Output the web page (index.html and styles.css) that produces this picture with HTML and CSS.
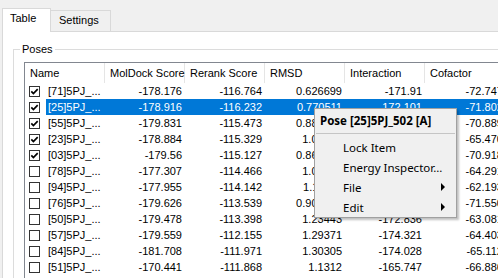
FILE: index.html
```html
<!DOCTYPE html>
<html lang="en">
<head>
  <meta charset="UTF-8">
  <title>Poses</title>
  <link rel="stylesheet" href="styles.css">
</head>
<body>
  <div class="tabs">
    <div class="tab active">Table</div>
    <div class="tab">Settings</div>
  </div>

  <div class="page">
    <fieldset class="group">
      <legend>Poses</legend>
      <div class="list">
        <div class="row head">
          <div class="cell name">Name</div>
          <div class="cell">MolDock Score</div>
          <div class="cell">Rerank Score</div>
          <div class="cell">RMSD</div>
          <div class="cell">Interaction</div>
          <div class="cell">Cofactor</div>
        </div>

        <div class="row">
          <div class="check on"><svg width="11" height="11"><rect x="0.5" y="0.5" width="10" height="10"/><path d="M2.3 5.4 L4.4 7.6 L8.7 3.2"/></svg></div>
          <div class="label">[71]5PJ_...</div>
          <div class="num">-178.176</div><div class="num">-116.764</div><div class="num">0.626699</div><div class="num">-171.91</div><div class="num">-72.7475</div>
        </div>
        <div class="row sel">
          <div class="check on"><svg width="11" height="11"><rect x="0.5" y="0.5" width="10" height="10"/><path d="M2.3 5.4 L4.4 7.6 L8.7 3.2"/></svg></div>
          <div class="label">[25]5PJ_...</div>
          <div class="num">-178.916</div><div class="num">-116.232</div><div class="num">0.770511</div><div class="num">-172.101</div><div class="num">-71.8024</div>
        </div>
        <div class="row">
          <div class="check on"><svg width="11" height="11"><rect x="0.5" y="0.5" width="10" height="10"/><path d="M2.3 5.4 L4.4 7.6 L8.7 3.2"/></svg></div>
          <div class="label">[55]5PJ_...</div>
          <div class="num">-179.831</div><div class="num">-115.473</div><div class="num">0.884421</div><div class="num">-172.453</div><div class="num">-70.8893</div>
        </div>
        <div class="row">
          <div class="check on"><svg width="11" height="11"><rect x="0.5" y="0.5" width="10" height="10"/><path d="M2.3 5.4 L4.4 7.6 L8.7 3.2"/></svg></div>
          <div class="label">[23]5PJ_...</div>
          <div class="num">-178.884</div><div class="num">-115.329</div><div class="num">1.02753</div><div class="num">-173.214</div><div class="num">-65.4706</div>
        </div>
        <div class="row">
          <div class="check on"><svg width="11" height="11"><rect x="0.5" y="0.5" width="10" height="10"/><path d="M2.3 5.4 L4.4 7.6 L8.7 3.2"/></svg></div>
          <div class="label">[03]5PJ_...</div>
          <div class="num">-179.56</div><div class="num">-115.127</div><div class="num">0.861043</div><div class="num">-171.648</div><div class="num">-70.9183</div>
        </div>
        <div class="row">
          <div class="check"><svg width="11" height="11"><rect x="0.5" y="0.5" width="10" height="10"/></svg></div>
          <div class="label">[78]5PJ_...</div>
          <div class="num">-177.307</div><div class="num">-114.466</div><div class="num">1.04812</div><div class="num">-170.972</div><div class="num">-64.2910</div>
        </div>
        <div class="row">
          <div class="check"><svg width="11" height="11"><rect x="0.5" y="0.5" width="10" height="10"/></svg></div>
          <div class="label">[94]5PJ_...</div>
          <div class="num">-177.955</div><div class="num">-114.142</div><div class="num">1.11957</div><div class="num">-172.377</div><div class="num">-62.1935</div>
        </div>
        <div class="row">
          <div class="check"><svg width="11" height="11"><rect x="0.5" y="0.5" width="10" height="10"/></svg></div>
          <div class="label">[76]5PJ_...</div>
          <div class="num">-179.626</div><div class="num">-113.539</div><div class="num">0.901394</div><div class="num">-173.905</div><div class="num">-71.5506</div>
        </div>
        <div class="row">
          <div class="check"><svg width="11" height="11"><rect x="0.5" y="0.5" width="10" height="10"/></svg></div>
          <div class="label">[50]5PJ_...</div>
          <div class="num">-179.478</div><div class="num">-113.398</div><div class="num">1.23443</div><div class="num">-172.836</div><div class="num">-63.0812</div>
        </div>
        <div class="row">
          <div class="check"><svg width="11" height="11"><rect x="0.5" y="0.5" width="10" height="10"/></svg></div>
          <div class="label">[57]5PJ_...</div>
          <div class="num">-179.559</div><div class="num">-112.155</div><div class="num">1.29371</div><div class="num">-174.321</div><div class="num">-64.4034</div>
        </div>
        <div class="row">
          <div class="check"><svg width="11" height="11"><rect x="0.5" y="0.5" width="10" height="10"/></svg></div>
          <div class="label">[84]5PJ_...</div>
          <div class="num">-181.708</div><div class="num">-111.971</div><div class="num">1.30305</div><div class="num">-174.028</div><div class="num">-65.1124</div>
        </div>
        <div class="row">
          <div class="check"><svg width="11" height="11"><rect x="0.5" y="0.5" width="10" height="10"/></svg></div>
          <div class="label">[51]5PJ_...</div>
          <div class="num">-170.441</div><div class="num">-111.868</div><div class="num">1.1312</div><div class="num">-165.747</div><div class="num">-66.8863</div>
        </div>
        <div class="row">
          <div class="check"><svg width="11" height="11"><rect x="0.5" y="0.5" width="10" height="10"/></svg></div>
          <div class="label">[62]5PJ_...</div>
          <div class="num">-178.012</div><div class="num">-111.502</div><div class="num">1.41207</div><div class="num">-170.335</div><div class="num">-68.2291</div>
        </div>
      </div>
    </fieldset>
  </div>

  <div class="menu">
    <div class="menu-title">Pose [25]5PJ_502 [A]</div>
    <div class="menu-sep"></div>
    <div class="menu-item">Lock Item</div>
    <div class="menu-item">Energy Inspector...</div>
    <div class="menu-item">File<span class="arrow"></span></div>
    <div class="menu-item">Edit<span class="arrow"></span></div>
  </div>
</body>
</html>
```

FILE: styles.css
```css
* { box-sizing: border-box; margin: 0; padding: 0; }
body {
  font-family: "Liberation Sans", Arial, sans-serif;
  font-size: 11px;
  color: #000;
  background: #f0f0f0;
  width: 498px;
  height: 278px;
  overflow: hidden;
  padding: 8px 0 0 2px;
}

/* tab strip */
.tabs {
  display: flex;
  align-items: flex-end;
  height: 23px;
}

.tab {
  width: 60px;
  height: 21px;
  padding: 3px 0 0 8px;
  line-height: 13px;
  border-top: 1px solid #d9d9d9;
  border-right: 1px solid #d9d9d9;
}

.tab.active {
  position: relative;
  width: 49px;
  height: 24px;
  margin-bottom: -1px;
  padding-left: 7px;
  background: #fff;
  border-left: 1px solid #d9d9d9;
}

.page {
  background: #fff;
  border-top: 1px solid #d9d9d9;
  border-left: 1px solid #d9d9d9;
  height: 250px;
  overflow: hidden;
}

/* group box */
.group {
  margin: 11px 0 0 10px;
  padding: 0 0 0 10px;
  border: 1px solid #dcdcdc;
}

.group legend {
  margin-left: -4px;
  padding: 0 2px;
  line-height: 13px;
}

/* list view */
.list {
  margin-top: 6px;
  border: 1px solid #828790;
  background: #fff;
}

.row {
  display: grid;
  grid-template-columns: 21px 59px 80px 80px 80px 80px 87px;
  height: 16px;
  line-height: 16px;
  white-space: nowrap;
}

.row.head {
  height: 20px;
  line-height: 20px;
}

.head .cell {
  padding-left: 5px;
  border-right: 1px solid #e5e5e5;
}

.head .name {
  grid-column: span 2;
}

.check {
  padding: 3px 0 0 4px;
}

.check svg {
  display: block;
}

.check rect {
  fill: #fff;
  stroke: #333;
}

.check path {
  fill: none;
  stroke: #000;
  stroke-width: 1.7;
}

.label {
  padding-left: 2px;
  overflow: hidden;
}

.num {
  text-align: right;
  padding-right: 3px;
}

.sel .label,
.sel .num {
  background: #0078d7;
  color: #fff;
}

/* context menu */
.menu {
  position: absolute;
  left: 314px;
  top: 108px;
  width: 143px;
  padding: 2px 0 0;
  background: #f0f0f0;
  border: 1px solid #a0a0a0;
  box-shadow: 2px 2px 2px rgba(0,0,0,0.25);
  font-family: "Noto Sans", sans-serif;
  font-size: 11.5px;
}

.menu-title {
  height: 20px;
  line-height: 20px;
  padding-left: 5px;
  font-weight: bold;
}

.menu-sep {
  height: 1px;
  margin: 2px 1px 3px;
  background: #c5c5c5;
}

.menu-item {
  display: flex;
  align-items: center;
  height: 20px;
  padding-left: 28px;
}

.arrow {
  margin-left: auto;
  margin-right: 11px;
  width: 0;
  height: 0;
  border-left: 4px solid #000;
  border-top: 4px solid transparent;
  border-bottom: 4px solid transparent;
}
```
